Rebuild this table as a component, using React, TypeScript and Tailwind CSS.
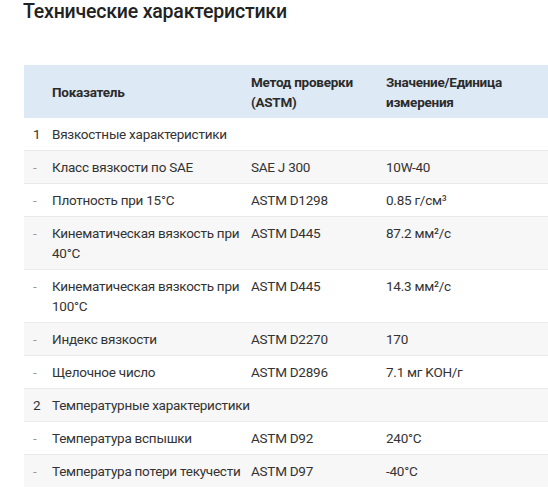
const rows: { n: string; name: string; method: string; value: string }[] = [
  { n: "1", name: "Вязкостные характеристики", method: "", value: "" },
  { n: "-", name: "Класс вязкости по SAE", method: "SAE J 300", value: "10W-40" },
  { n: "-", name: "Плотность при 15°C", method: "ASTM D1298", value: "0.85 г/см³" },
  { n: "-", name: "Кинематическая вязкость при 40°C", method: "ASTM D445", value: "87.2 мм²/с" },
  { n: "-", name: "Кинематическая вязкость при 100°C", method: "ASTM D445", value: "14.3 мм²/с" },
  { n: "-", name: "Индекс вязкости", method: "ASTM D2270", value: "170" },
  { n: "-", name: "Щелочное число", method: "ASTM D2896", value: "7.1 мг KOH/г" },
  { n: "2", name: "Температурные характеристики", method: "", value: "" },
  { n: "-", name: "Температура вспышки", method: "ASTM D92", value: "240°C" },
  { n: "-", name: "Температура потери текучести", method: "ASTM D97", value: "-40°C" },
]

export default function App() {
  return (
    <div className="min-h-[500px] w-[548px] overflow-hidden bg-white pl-[24px] font-['Roboto',sans-serif] text-[#333]">
      <h2 className="-ml-px text-[19.5px] font-medium leading-[24px] tracking-[-0.2px] text-[#222]">
        Технические характеристики
      </h2>

      <table className="mt-[41px] w-[524px] table-fixed border-collapse text-left text-[13.5px] leading-[20px] tracking-[-0.25px]">
        <colgroup>
          <col className="w-[20px]" />
          <col className="w-[199px]" />
          <col className="w-[135px]" />
          <col />
        </colgroup>
        <thead>
          <tr className="h-[53px] bg-[#dde9f5] text-[#2b2b2b]">
            <th className="pl-[9px]" />
            <th className="pl-[8px] font-bold">Показатель</th>
            <th className="pl-[8px] pr-[4px] font-bold">Метод проверки (ASTM)</th>
            <th className="pl-[8px] pr-[4px] font-bold">Значение/Единица измерения</th>
          </tr>
        </thead>
        <tbody>
          {rows.map((r, i) => {
            const odd = i % 2 === 1
            const isGroup = r.n !== "-"
            return (
              <tr
                key={i}
                className={
                  (odd ? "bg-[#f7f7f7] " : "bg-white ") +
                  (i < rows.length - 1 ? "border-b border-[#e9e9e9]" : "")
                }
              >
                <td className={"py-[6px] pl-[9px] align-top " + (isGroup ? "text-[#333]" : "text-[#999]")}>
                  {r.n}
                </td>
                {isGroup ? (
                  <td colSpan={3} className="py-[6px] pl-[8px] align-top">
                    {r.name}
                  </td>
                ) : (
                  <>
                    <td className="py-[6px] pl-[8px] align-top">{r.name}</td>
                    <td className="py-[6px] pl-[8px] pr-[4px] align-top">{r.method}</td>
                    <td className="py-[6px] pl-[8px] pr-[4px] align-top">{r.value}</td>
                  </>
                )}
              </tr>
            )
          })}
        </tbody>
      </table>
    </div>
  )
}
